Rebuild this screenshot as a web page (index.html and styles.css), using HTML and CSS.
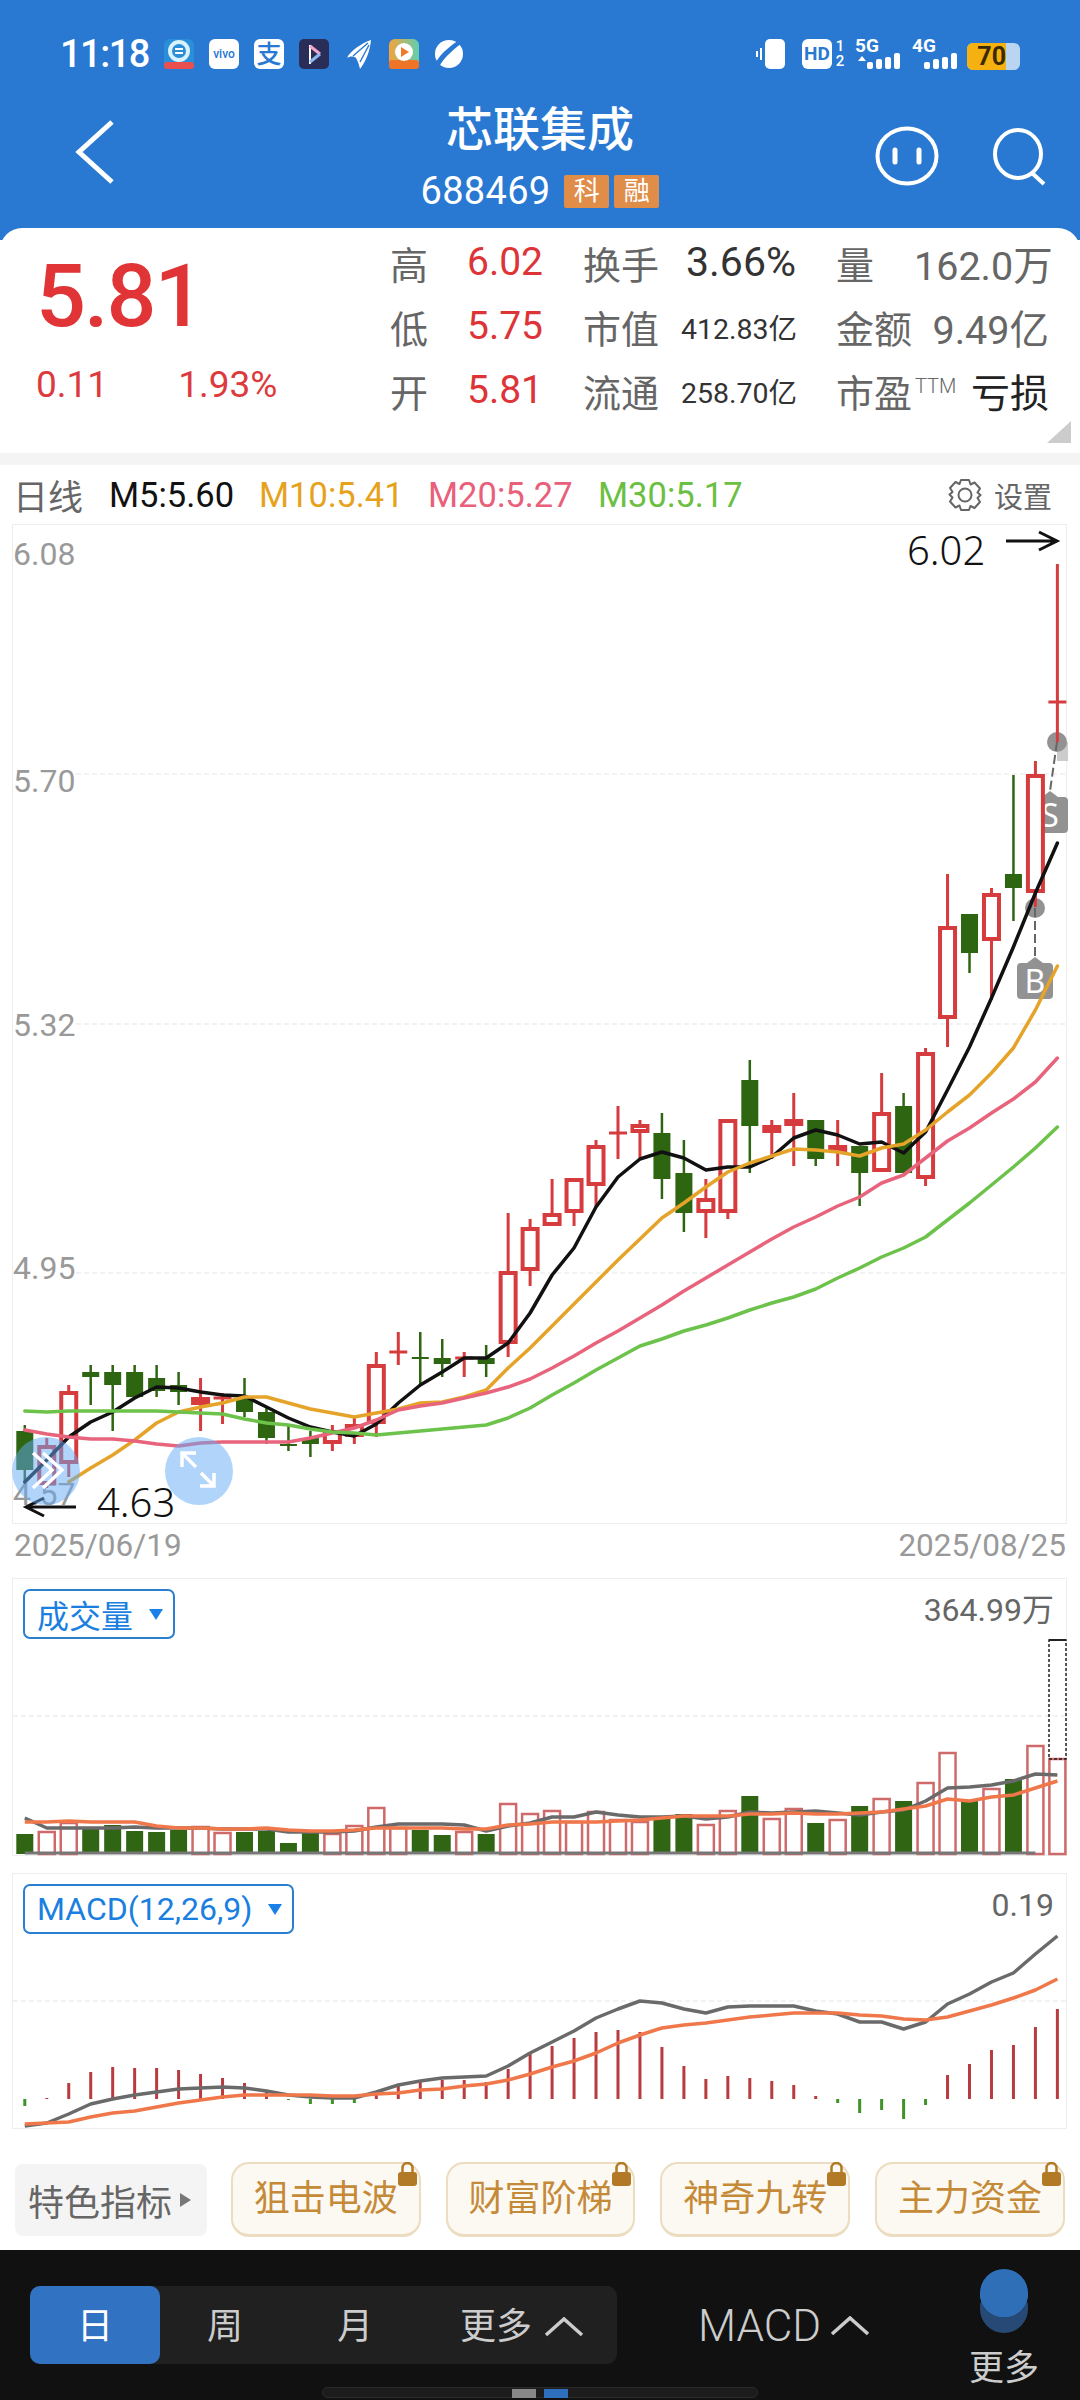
FILE: index.html
```html
<!DOCTYPE html>
<html lang="zh">
<head>
    <meta charset="utf-8">
    <title>芯联集成</title>
    <link rel="stylesheet" href="styles.css">
</head>
<body>
    <header class="top">
        <div class="status-bar">
            <span class="clock">11:18</span>
            <div class="app-icons">
                <svg class="app-icon" viewBox="0 0 30 30"><rect width="30" height="30" rx="6" fill="#2a8fd8"/><rect y="23" width="30" height="7" rx="3" fill="#e8504f"/><circle cx="15" cy="12" r="9" fill="none" stroke="#d8f2fb" stroke-width="4"/><rect x="11" y="9" width="8" height="2" fill="#fff"/><rect x="11" y="13" width="8" height="2" fill="#fff"/></svg>
                <svg class="app-icon" viewBox="0 0 30 30"><rect width="30" height="30" rx="6" fill="#fff"/><text class="vivo-mark" x="15" y="19" text-anchor="middle">vivo</text></svg>
                <svg class="app-icon" viewBox="0 0 30 30"><rect width="30" height="30" rx="6" fill="#fff"/><text class="alipay-mark" x="15" y="24" text-anchor="middle">支</text></svg>
                <svg class="app-icon" viewBox="0 0 30 30"><rect width="30" height="30" rx="5" fill="#2a2d57"/><path d="M11 6v19" stroke="#fff" stroke-width="2"/><path d="M11 7l10 8" stroke="#f2a6c8" stroke-width="3"/><path d="M21 15l-10 8" stroke="#8fb8ef" stroke-width="3"/></svg>
                <svg class="app-icon" viewBox="0 0 30 30"><path d="M27 1C18 4 6 12 3 19c3-2 7-2 9 0 2 3 3 7 4 11 6-8 10-18 11-29z" fill="#fff"/><path d="M24 4L9 17M25 6l-9 17" stroke="#2878d4" stroke-width="1.400"/></svg>
                <svg class="app-icon" viewBox="0 0 30 30"><defs><linearGradient id="tv-fill" x1="0" y1="0" x2="1" y2="0"><stop offset="0" stop-color="#f5a33a"/><stop offset="1" stop-color="#5fd0b0"/></linearGradient></defs><rect width="30" height="30" rx="6" fill="url(#tv-fill)"/><rect y="21" width="30" height="9" rx="3" fill="#ee7428"/><circle cx="15" cy="13" r="9" fill="#fff"/><path d="M12 8l8 5-8 5z" fill="#ef7a2a"/></svg>
                <svg class="app-icon" viewBox="0 0 30 30"><circle cx="15" cy="15" r="14" fill="#fff"/><path d="M27 0C20 4 6 14 1 25l4 3C10 18 22 8 30 3z" fill="#2878d4"/></svg>
            </div>
            <div class="sys-icons">
                <svg class="sys-vibrate" viewBox="0 0 30 30"><rect x="9" y="0" width="20" height="30" rx="5" fill="#fff"/><path d="M5 9v12M1 12v6" stroke="#fff" stroke-width="2" fill="none"/></svg>
                <span class="hd-box">HD</span>
                <span class="sim-nums">1<br>2</span>
                <div class="signal">
                    <div class="net"><span>5G</span><i class="updown"></i></div>
                    <div class="bars"><i class="b1"></i><i class="b2"></i><i class="b3"></i><i class="b4"></i></div>
                </div>
                <div class="signal sig-4g">
                    <div class="net"><span>4G</span></div>
                    <div class="bars"><i class="b1"></i><i class="b2"></i><i class="b3"></i><i class="b4"></i></div>
                </div>
                <div class="battery"><span class="battery-level">70</span></div>
            </div>
        </div>
        <nav class="nav">
            <svg class="nav-back" viewBox="0 0 40 66"><path d="M37 3L4 33l33 30" fill="none" stroke="#fff" stroke-width="5"/></svg>
            <div class="nav-title">
                <h1>芯联集成</h1>
                <div class="nav-code"><span>688469</span><b class="tag">科</b><b class="tag">融</b></div>
            </div>
            <svg class="nav-face" viewBox="0 0 64 60"><ellipse cx="32" cy="30" rx="29.500" ry="27.500" fill="none" stroke="#fff" stroke-width="4"/><path d="M20 24v12M44 24v12" stroke="#fff" stroke-width="5" stroke-linecap="round"/></svg>
            <svg class="nav-search" viewBox="0 0 54 58"><ellipse cx="25" cy="26" rx="23" ry="24" fill="none" stroke="#fff" stroke-width="4"/><path d="M39 45l12 11" stroke="#fff" stroke-width="4"/></svg>
        </nav>
    </header>

    <section class="quote">
        <div class="quote-main">
            <div class="last-price">5.81</div>
            <div class="change"><span>0.11</span><span>1.93%</span></div>
        </div>
        <div class="quote-table">
            <span class="q-label">高</span><span class="q-up">6.02</span><span class="q-label">换手</span><span class="q-val">3.66%</span><span class="q-label">量</span><span class="q-grey">162.0万</span>
            <span class="q-label">低</span><span class="q-up">5.75</span><span class="q-label">市值</span><span class="q-val small">412.83亿</span><span class="q-label">金额</span><span class="q-grey">9.49亿</span>
            <span class="q-label">开</span><span class="q-up">5.81</span><span class="q-label">流通</span><span class="q-val small">258.70亿</span><span class="q-label">市盈<sup>TTM</sup></span><span class="q-loss">亏损</span>
        </div>
        <i class="quote-fold"></i>
    </section>
    <div class="divider"></div>

    <div class="legend">
        <span class="lg-period">日线</span>
        <span class="lg-m5">M5:5.60</span>
        <span class="lg-m10">M10:5.41</span>
        <span class="lg-m20">M20:5.27</span>
        <span class="lg-m30">M30:5.17</span>
        <span class="lg-set">
            <svg class="gear" viewBox="0 0 34 34"><path d="M13 2h8l1.500 4.500 4-2 5.500 6-2.500 4 3 2.500-3 3 2.500 4-5.500 6-4-2L21 32h-8l-1.500-4.500-4 2-5.500-6 2.500-4-3-3 3-2.500-2.500-4 5.500-6 4 2z" fill="none" stroke="#666" stroke-width="2" stroke-linejoin="round"/><circle cx="17" cy="17" r="6.500" fill="none" stroke="#666" stroke-width="2"/></svg>
            设置
        </span>
    </div>

    <!-- the three panels use page coordinates in their viewBox -->
    <div class="panel panel-price">
        <svg viewBox="13 525 1053 998">
            <path class="grid" d="M76 774H1066M76 1024H1066M76 1273H1066"/>
            <text class="axis" x="13" y="565">6.08</text>
            <text class="axis" x="13" y="792">5.70</text>
            <text class="axis" x="13" y="1036">5.32</text>
            <text class="axis" x="13" y="1279">4.95</text>
            <text class="axis" x="13" y="1505">4.57</text>
            <g class="trade-marks">
                <rect x="1057" y="742" width="11" height="19" fill="#ccc"/>
                <circle cx="1057" cy="742" r="10"/>
                <path class="trade-link" d="M1057 742L1050 791"/>
                <path d="M1036 797h6l8-6 8 6h6a4 4 0 0 1 4 4v28a4 4 0 0 1-4 4h-28a4 4 0 0 1-4-4v-28a4 4 0 0 1 4-4z"/>
                <circle cx="1035" cy="908" r="10"/>
                <path class="trade-link" d="M1035 908V958"/>
                <path d="M1021 963h6l8-6 8 6h6a4 4 0 0 1 4 4v28a4 4 0 0 1-4 4h-28a4 4 0 0 1-4-4v-28a4 4 0 0 1 4-4z"/>
                <text class="trade-letter" x="1050" y="827">S</text>
                <text class="trade-letter" x="1035" y="993">B</text>
            </g>
            <g id="candles"></g>
            <g id="price-lines"></g>
            <text class="extreme" x="907" y="565">6.02</text>
            <path class="extreme-arrow" d="M1006 541H1056M1039 532L1057 541L1039 550"/>
            <text class="extreme" x="97" y="1517">4.63</text>
            <path class="extreme-arrow" d="M76 1507H27M44 1498L26 1507L44 1516"/>
            <circle class="float-btn" cx="46" cy="1471" r="34"/>
            <path class="float-icon" d="M33 1453L52 1470L33 1488M43 1453L62 1470L43 1488"/>
            <circle class="float-btn" cx="199" cy="1471" r="34"/>
            <path class="float-icon" d="M182 1467V1453H196M182 1453L196 1467M214 1473V1486H200M214 1486L201 1473"/>
        </svg>
    </div>

    <div class="dates"><span>2025/06/19</span><span>2025/08/25</span></div>

    <div class="panel panel-vol">
        <svg viewBox="13 1579 1053 276">
            <path class="grid" d="M13 1716H1066"/>
            <g id="vol-bars"></g>
            <rect class="vol-peak" x="1049" y="1640" width="17" height="119"/>
            <path class="vol-peak-top" d="M1049 1640H1066"/>
            <g id="vol-lines"></g>
        </svg>
        <div class="picker"><span>成交量</span><i class="caret"></i></div>
        <span class="panel-max">364.99万</span>
    </div>

    <div class="panel panel-macd">
        <svg viewBox="13 1874 1053 254">
            <path class="grid" d="M13 2001H1066"/>
            <g id="macd-bars"></g>
            <g id="macd-lines"></g>
        </svg>
        <div class="picker"><span>MACD(12,26,9)</span><i class="caret"></i></div>
        <span class="panel-max">0.19</span>
    </div>

    <div class="indicators">
        <div class="ind-menu">特色指标<i></i></div>
        <div class="ind-btn">狙击电波<svg class="lock" viewBox="0 0 19 24"><path d="M4.500 11V6a5 5 0 0 1 10 0v5" fill="none" stroke="#b27a26" stroke-width="2.500"/><rect y="10" width="19" height="14" rx="3" fill="#b27a26"/></svg></div>
        <div class="ind-btn">财富阶梯<svg class="lock" viewBox="0 0 19 24"><path d="M4.500 11V6a5 5 0 0 1 10 0v5" fill="none" stroke="#b27a26" stroke-width="2.500"/><rect y="10" width="19" height="14" rx="3" fill="#b27a26"/></svg></div>
        <div class="ind-btn">神奇九转<svg class="lock" viewBox="0 0 19 24"><path d="M4.500 11V6a5 5 0 0 1 10 0v5" fill="none" stroke="#b27a26" stroke-width="2.500"/><rect y="10" width="19" height="14" rx="3" fill="#b27a26"/></svg></div>
        <div class="ind-btn">主力资金<svg class="lock" viewBox="0 0 19 24"><path d="M4.500 11V6a5 5 0 0 1 10 0v5" fill="none" stroke="#b27a26" stroke-width="2.500"/><rect y="10" width="19" height="14" rx="3" fill="#b27a26"/></svg></div>
    </div>

    <footer class="bottom">
        <div class="tabs">
            <span class="tab active">日</span>
            <span class="tab">周</span>
            <span class="tab">月</span>
            <span class="tab tab-more">更多<svg class="chev" viewBox="0 0 40 20"><path d="M2 18L20 2l18 16" fill="none" stroke="#ccc" stroke-width="3.500"/></svg></span>
        </div>
        <div class="bottom-macd">MACD<svg class="chev" viewBox="0 0 40 20"><path d="M2 18L20 2l18 16" fill="none" stroke="#ccc" stroke-width="3.500"/></svg></div>
        <div class="bottom-more">
            <div class="dots"></div>
            <span>更多</span>
        </div>
        <div class="pager"><i class="pg-grey"></i><i class="pg-blue"></i></div>
    </footer>

    <script src="chart.js"></script>
</body>
</html>
```

FILE: styles.css
```css
* {
    box-sizing: border-box;
}

html, body {
    margin: 0;
    padding: 0;
}

body {
    width: 1080px;
    height: 2400px;
    overflow: hidden;
    background: #fff;
    color: #333;
    font-family: Roboto, "Noto Sans CJK SC", sans-serif;
}

/* header */
.top {
    height: 240px;
    margin-bottom: -12px;
    padding-top: 38px;
    background: #2979d3;
    color: #fff;
}

.status-bar {
    display: flex;
    align-items: center;
    height: 32px;
    padding: 0 60px 0 60px;
}

.clock {
    width: 104px;
    font-size: 38px;
    font-weight: 500;
    letter-spacing: -1.500px;
}

.app-icons {
    display: flex;
    gap: 15px;
}

.app-icon {
    width: 30px;
    height: 30px;
    overflow: visible;
}

.vivo-mark {
    font: 500 12px Roboto, sans-serif;
    fill: #2878d4;
}

.alipay-mark {
    font: 500 25px "Noto Sans CJK SC", sans-serif;
    fill: #2878d4;
}

.sys-icons {
    display: flex;
    align-items: center;
    margin-left: auto;
}

.sys-vibrate {
    width: 30px;
    height: 30px;
}

.hd-box {
    width: 30px;
    height: 30px;
    margin-left: 16px;
    border-radius: 6px;
    background: #fff;
    color: #2979d3;
    font-size: 19px;
    font-weight: 700;
    line-height: 30px;
    text-align: center;
}

.sim-nums {
    width: 14px;
    margin-left: 1px;
    font-size: 15px;
    font-weight: 500;
    line-height: 15px;
    text-align: center;
}

.signal {
    width: 45px;
    margin-left: 8px;
}

.sig-4g {
    margin-left: 12px;
}

.net {
    position: relative;
    height: 14px;
    font-size: 19px;
    font-weight: 700;
    line-height: 14px;
}

.bars {
    display: flex;
    align-items: flex-end;
    justify-content: flex-end;
    gap: 3px;
    height: 16px;
}

.bars i {
    display: block;
    width: 6px;
    border-radius: 2px;
    background: #fff;
}

.bars .b1 { height: 7px; }
.bars .b2 { height: 10px; }
.bars .b3 { height: 12px; }
.bars .b4 { height: 16px; }

.updown {
    position: absolute;
    left: 3px;
    top: 17px;
    width: 0;
    height: 0;
    border: 4px solid transparent;
    border-bottom: 5px solid #fff;
    border-top: 0;
}

.battery {
    width: 53px;
    height: 27px;
    margin: 5px 0 0 10px;
    border-radius: 6px;
    background: #b9d5f2;
    overflow: hidden;
}

.battery-level {
    display: block;
    width: 39px;
    height: 27px;
    background: #f5b110;
    color: #3a2a00;
    font-size: 25px;
    font-weight: 700;
    line-height: 27px;
    text-align: right;
}

.nav {
    position: relative;
    height: 130px;
}

.nav-back {
    position: absolute;
    left: 75px;
    top: 49px;
    width: 40px;
    height: 66px;
}

.nav-title {
    display: flex;
    flex-direction: column;
    align-items: center;
    padding-top: 26px;
}

h1 {
    margin: 0;
    font-size: 47px;
    font-weight: 500;
    line-height: 68px;
}

.nav-code {
    display: flex;
    align-items: center;
    gap: 5px;
    margin-top: 10px;
    font-size: 38px;
    line-height: 34px;
    letter-spacing: 0.300px;
}

.nav-code span {
    margin-right: 9px;
}

.tag {
    width: 45px;
    height: 33px;
    border-radius: 2px;
    background: #df8d49;
    color: #fff;
    font-size: 26px;
    font-weight: 400;
    line-height: 33px;
    text-align: center;
}

.nav-face {
    position: absolute;
    left: 875px;
    top: 56px;
    width: 64px;
    height: 60px;
}

.nav-search {
    position: absolute;
    left: 993px;
    top: 58px;
    width: 54px;
    height: 58px;
}

/* quote block */
.quote {
    position: relative;
    display: flex;
    height: 225px;
    border-radius: 22px 22px 0 0;
    background: #fff;
}

.quote-main {
    width: 388px;
    padding-left: 36px;
}

.last-price {
    height: 118px;
    color: #e03436;
    font-size: 88px;
    font-weight: 500;
    letter-spacing: -2px;
    line-height: 136px;
}

.change {
    display: flex;
    gap: 70px;
    margin-top: 18px;
    color: #dd3a3d;
    font-size: 37px;
    line-height: 42px;
}

.quote-table {
    display: grid;
    grid-template-columns: 77px 116px 103px 150px 78px 135px;
    grid-auto-rows: 64px;
    align-items: center;
    margin-left: 2px;
    padding-top: 2px;
    font-size: 38px;
}

.q-label {
    color: #666;
    white-space: nowrap;
}

.q-label sup {
    margin-left: 3px;
    font-size: 20px;
    font-weight: 300;
    line-height: 0;
    vertical-align: 14px;
}

.q-up {
    color: #dd3438;
    font-size: 39px;
}

.q-val {
    color: #333;
    font-size: 41px;
    white-space: nowrap;
}

.q-val.small {
    margin-left: -5px;
    font-size: 28.500px;
}

.q-grey {
    color: #666;
    font-size: 39.500px;
    text-align: right;
    white-space: nowrap;
}

.q-loss {
    color: #222;
    font-size: 39px;
    text-align: right;
}

.quote-fold {
    position: absolute;
    right: 9px;
    top: 193px;
    border-left: 24px solid transparent;
    border-bottom: 22px solid #ccc;
}

.divider {
    height: 12px;
    background: #f4f4f4;
}

/* MA legend */
.legend {
    display: flex;
    align-items: center;
    height: 59px;
    padding-left: 13px;
    font-size: 34.500px;
}

.lg-period {
    width: 96px;
    color: #666;
    font-size: 35px;
}

.lg-m5 { width: 150px; color: #111; }
.lg-m10 { width: 169px; color: #e6a21c; }
.lg-m20 { width: 170px; color: #e8607a; }
.lg-m30 { color: #6bbf42; }

.lg-set {
    display: flex;
    align-items: center;
    gap: 12px;
    margin-left: auto;
    padding-right: 28px;
    color: #666;
    font-size: 29px;
}

.gear {
    width: 34px;
    height: 34px;
}

/* chart panels */
.panel {
    position: relative;
    margin: 0 13px 0 12px;
    border: 1px solid #eee;
}

.panel svg {
    display: block;
    width: 100%;
    height: 100%;
    overflow: visible;
}

.panel-price { height: 1000px; }
.panel-vol { height: 278px; }
.panel-macd { height: 256px; margin-top: 17px; }

.grid {
    fill: none;
    stroke: #eee;
    stroke-width: 1.500;
    stroke-dasharray: 5 3;
}

.axis {
    fill: #999;
    font-size: 32px;
}

.extreme {
    fill: #111;
    font-family: "Noto Sans", sans-serif;
    font-size: 40px;
    font-weight: 300;
}

.extreme-arrow {
    fill: none;
    stroke: #111;
    stroke-width: 3;
}

.trade-marks {
    fill: #929292;
}

.trade-link {
    fill: none;
    stroke: #666;
    stroke-width: 2;
    stroke-dasharray: 9 4;
}

.trade-letter {
    fill: #fff;
    font-size: 32px;
    font-family: "Noto Sans", sans-serif;
    text-anchor: middle;
}

.float-btn {
    fill: rgba(100, 170, 245, 0.5);
}

.float-icon {
    fill: none;
    stroke: #fff;
    stroke-width: 3.500;
}

.up-candle {
    fill: #fff;
    stroke: #d63c3e;
    stroke-width: 4;
}

.up-wick {
    stroke: #d63c3e;
    stroke-width: 3;
}

.down-candle {
    fill: #2d6510;
}

.down-wick {
    stroke: #2d6510;
    stroke-width: 2.500;
}

.ma {
    fill: none;
    stroke-width: 3.500;
    stroke-linejoin: round;
    stroke-linecap: round;
}

.ma-5 { stroke: #111; }
.ma-10 { stroke: #e5a429; }
.ma-20 { stroke: #e8647c; }
.ma-30 { stroke: #6cc24a; }

.vol-up {
    fill: #fff;
    stroke: #cf6a6a;
    stroke-width: 2.500;
}

.vol-down {
    fill: #2f6513;
}

.vol-peak {
    fill: none;
    stroke: #222;
    stroke-width: 1.500;
    stroke-dasharray: 3 2;
}

.vol-peak-top {
    stroke: #222;
    stroke-width: 2;
}

.vol-base {
    stroke: #777;
    stroke-width: 3;
}

.line-grey {
    fill: none;
    stroke: #6a6a6a;
    stroke-width: 3.500;
    stroke-linejoin: round;
}

.line-orange {
    fill: none;
    stroke: #f0774a;
    stroke-width: 3.500;
    stroke-linejoin: round;
}

.macd-up {
    fill: #b83c3f;
}

.macd-down {
    fill: #3e9426;
}

.picker {
    position: absolute;
    left: 10px;
    top: 10px;
    display: flex;
    align-items: center;
    gap: 16px;
    height: 50px;
    padding: 0 10px 0 12px;
    border: 2px solid #2b7fd0;
    border-radius: 7px;
    background: #fff;
    color: #1a7fe0;
    font-size: 32px;
}

.caret {
    width: 0;
    height: 0;
    border-left: 7px solid transparent;
    border-right: 7px solid transparent;
    border-top: 11px solid #1a80e8;
}

.panel-max {
    position: absolute;
    right: 12px;
    top: 12px;
    color: #666;
    font-size: 32px;
    line-height: 38px;
}

.dates {
    display: flex;
    justify-content: space-between;
    align-items: center;
    height: 54px;
    padding: 0 14px 11px;
    color: #999;
    font-size: 31.500px;
}

/* indicator buttons */
.indicators {
    display: flex;
    align-items: center;
    height: 75px;
    margin: 33px 15px 13px 15px;
}

.ind-menu {
    display: flex;
    align-items: center;
    width: 192px;
    height: 72px;
    margin-right: 24px;
    padding-left: 13px;
    border-radius: 8px;
    background: #f4f4f4;
    color: #666;
    font-size: 36px;
    white-space: nowrap;
}

.ind-menu i {
    width: 0;
    height: 0;
    margin-left: 8px;
    border-top: 7px solid transparent;
    border-bottom: 7px solid transparent;
    border-left: 11px solid #777;
}

.ind-btn {
    position: relative;
    width: 190px;
    height: 75px;
    margin-right: 25px;
    border: 2px solid #ecdcc0;
    border-bottom-width: 3px;
    border-radius: 18px;
    background: #fcf9f2;
    color: #c58a38;
    font-size: 36px;
    line-height: 70px;
    text-align: center;
    white-space: nowrap;
}

.ind-btn:last-child {
    margin-right: 0;
}

.lock {
    position: absolute;
    right: 2px;
    top: -2px;
    width: 19px;
    height: 24px;
}

/* bottom bar */
.bottom {
    position: relative;
    height: 150px;
    background: #111;
    color: #ccc;
}

.tabs {
    position: absolute;
    left: 30px;
    top: 36px;
    display: flex;
    width: 587px;
    height: 78px;
    border-radius: 10px;
    background: #202020;
    font-size: 36px;
    line-height: 82px;
    text-align: center;
}

.tab {
    width: 130px;
}

.tab.active {
    border-radius: 10px;
    background: #3173c2;
    color: #fff;
}

.tab-more {
    display: flex;
    align-items: center;
    gap: 12px;
    width: 197px;
    padding: 4px 0 0 40px;
}

.chev {
    width: 40px;
    height: 20px;
}

.bottom-macd {
    position: absolute;
    left: 698px;
    top: 51px;
    display: flex;
    align-items: center;
    gap: 9px;
    font-size: 44px;
    font-weight: 300;
    line-height: 50px;
}

.bottom-more {
    position: absolute;
    left: 968px;
    top: 19px;
    width: 72px;
    font-size: 35px;
    line-height: 44px;
    text-align: center;
}

.dots {
    width: 48px;
    height: 64px;
    margin: 0 auto 14px;
    border-radius: 24px;
    background: radial-gradient(circle at 24px 24px, #2e6fb8 24px, transparent 24.500px),
        radial-gradient(circle at 24px 40px, #264a75 24px, transparent 24.500px);
}

.pager {
    position: absolute;
    left: 322px;
    top: 137px;
    width: 436px;
    height: 11px;
    border: 1px solid #2a2a2a;
    border-radius: 5px;
    background: #1c1c1c;
}

.pager i {
    position: absolute;
    top: 1px;
    width: 24px;
    height: 9px;
}

.pg-grey {
    left: 189px;
    background: #888;
}

.pg-blue {
    left: 221px;
    background: #2e70bd;
}
```

FILE: chart.js
```js
// kline data for 2025/06/19 - 2025/08/25, all y values already scaled to the screen
const step = 21.97;
const xAt = (i) => 24.8 + step * i;

// [up?, high, bodyTop, bodyBottom, low]
const candles = [
    [0,1425,1431,1470,1483],[1,1438,1445,1485,1488],[1,1385,1391,1464,1477],[0,1365,1372,1377,1405],
    [0,1365,1372,1385,1431],[0,1365,1372,1397,1397],[0,1365,1378,1391,1397],[0,1372,1385,1392,1405],
    [1,1378,1397,1405,1431],[1,1393,1397,1399,1424],[0,1378,1398,1412,1417],[0,1407,1412,1438,1444],
    [0,1425,1444,1446,1451],[0,1431,1438,1444,1457],[1,1425,1430,1444,1451],[1,1418,1424,1437,1444],
    [1,1352,1364,1424,1437],[1,1332,1351,1353,1365],[0,1332,1357,1359,1385],[0,1339,1358,1364,1377],
    [1,1352,1357,1359,1377],[0,1345,1358,1364,1377],[1,1213,1271,1344,1357],[1,1219,1227,1271,1286],
    [1,1179,1213,1226,1226],[1,1178,1178,1213,1226],[1,1140,1145,1186,1207],[1,1106,1132,1134,1159],
    [1,1120,1124,1133,1159],[0,1113,1133,1179,1199],[0,1140,1173,1213,1232],[1,1179,1198,1213,1238],
    [1,1119,1119,1213,1219],[0,1060,1080,1126,1173],[1,1120,1125,1133,1159],[1,1093,1119,1126,1166],
    [0,1120,1120,1159,1166],[1,1120,1145,1152,1166],[0,1146,1146,1173,1206],[1,1073,1112,1172,1172],
    [0,1093,1106,1173,1173],[1,1048,1052,1179,1186],[1,874,926,1019,1047],[0,914,914,953,973],
    [1,888,893,941,1000],[0,775,874,888,921],[1,761,774,893,907],[1,564,701,703,742]
];

const ma5 = [1482,1460,1437,1422,1412,1398,1387,1388,1392,1395,1396,1407,1418,1427,1432,1436,1424,1403,1385,1372,1358,1358,1343,1313,1275,1248,1207,1177,1159,1152,1158,1170,1167,1167,1157,1138,1130,1135,1144,1142,1153,1132,1090,1047,998,947,893,843];
const ma10 = [null,null,1482,1468,1455,1440,1423,1412,1407,1403,1397,1397,1403,1409,1413,1417,1413,1409,1403,1402,1397,1390,1368,1348,1326,1304,1282,1260,1239,1218,1203,1187,1172,1163,1156,1149,1150,1152,1156,1148,1144,1130,1112,1095,1073,1048,1010,966];
const ma20 = [1430,1434,1437,1439,1439,1441,1444,1446,1443,1442,1442,1442,1442,1438,1433,1428,1420,1410,1406,1403,1398,1393,1387,1379,1368,1356,1343,1331,1318,1305,1291,1278,1265,1252,1239,1227,1217,1206,1197,1183,1175,1158,1141,1128,1113,1099,1082,1058];
const ma30 = [1411,1412,1411,1411,1411,1411,1411,1412,1413,1414,1419,1423,1425,1429,1432,1433,1435,1433,1431,1429,1427,1425,1418,1408,1395,1383,1370,1358,1346,1339,1331,1325,1318,1310,1303,1297,1289,1278,1268,1257,1248,1237,1220,1203,1185,1167,1148,1127];

// volume: [up?, top]
const volumes = [
    [0,1834],[1,1832],[1,1823],[0,1828],[0,1825],[0,1831],[0,1832],[0,1830],[1,1827],[1,1833],[0,1832],[0,1831],
    [0,1843],[0,1833],[1,1834],[1,1826],[1,1808],[1,1828],[0,1830],[0,1835],[1,1832],[0,1834],[1,1804],[1,1814],
    [1,1811],[1,1822],[1,1812],[1,1820],[1,1822],[0,1817],[0,1814],[1,1825],[1,1811],[0,1796],[1,1819],[1,1809],
    [0,1823],[1,1820],[0,1806],[1,1799],[0,1801],[1,1783],[1,1753],[0,1800],[1,1789],[0,1779],[1,1746],[1,1759]
];
const volShort = [1818,1828,1828,1828,1828,1827,1828,1828,1828,1829,1829,1829,1832,1832,1832,1831,1827,1824,1824,1824,1825,1831,1826,1823,1817,1817,1812,1815,1817,1817,1816,1819,1817,1812,1813,1812,1811,1813,1815,1812,1810,1801,1788,1787,1785,1781,1774,1775];
const volLong = [1822,1822,1821,1822,1822,1822,1826,1828,1828,1829,1829,1828,1830,1831,1831,1830,1828,1828,1828,1828,1829,1829,1825,1824,1822,1822,1822,1821,1820,1818,1816,1816,1816,1814,1814,1813,1814,1814,1813,1812,1809,1806,1799,1801,1797,1795,1788,1781];

// MACD histogram height above zero line, negative is below
const zero = 2099;
const hist = [-7,1,16,27,32,31,31,29,25,21,16,8,-1,-5,-5,-4,7,15,18,19,19,17,30,45,53,61,67,69,67,52,33,20,23,21,18,14,3,-4,-14,-11,-20,-6,24,35,49,54,72,90];
const dif = [2126,2123,2114,2104,2099,2095,2092,2089,2088,2087,2088,2091,2095,2097,2098,2098,2092,2085,2081,2078,2077,2076,2066,2053,2042,2031,2018,2009,2001,2003,2009,2013,2007,2006,2006,2006,2011,2014,2022,2022,2029,2022,2004,1994,1982,1973,1954,1936];
const dea = [2124,2123,2122,2117,2113,2111,2107,2103,2100,2097,2095,2095,2095,2095,2096,2096,2094,2093,2090,2089,2086,2084,2080,2074,2067,2061,2053,2043,2035,2028,2025,2023,2020,2017,2015,2013,2013,2013,2015,2016,2019,2020,2017,2011,2005,1998,1990,1979];

function polyline(values, cls) {
    const pts = values
        .map((y, i) => (y === null ? null : `${xAt(i).toFixed(1)},${y}`))
        .filter(Boolean)
        .join(' ');
    return `<polyline class="${cls}" points="${pts}"/>`;
}

function fill(id, html) {
    document.getElementById(id).innerHTML = html;
}

function candleMarkup(c, i) {
    const [up, high, top, bottom, low] = c;
    const x = xAt(i);
    if (up) {
        const inner = bottom - top - 4;
        return `<path class="up-wick" d="M${x} ${high}V${top}M${x} ${bottom}V${low}"/>` +
            (inner > 1
                ? `<rect class="up-candle" x="${x - 7.5}" y="${top + 2}" width="15" height="${inner}"/>`
                : `<path class="up-wick" d="M${x - 9} ${(top + bottom) / 2}h18"/>`);
    }
    return `<path class="down-wick" d="M${x} ${high}V${low}"/>` +
        `<rect class="down-candle" x="${x - 8.5}" y="${top}" width="17" height="${bottom - top}"/>`;
}

fill('candles', candles.map(candleMarkup).join(''));
fill('price-lines',
    polyline(ma5, 'ma ma-5') + polyline(ma10, 'ma ma-10') +
    polyline(ma20, 'ma ma-20') + polyline(ma30, 'ma ma-30'));

const volBase = 1854;
fill('vol-bars', volumes.map(([up, top], i) => {
    const x = xAt(i);
    return up
        ? `<rect class="vol-up" x="${x - 8}" y="${top}" width="16" height="${volBase - top}"/>`
        : `<rect class="vol-down" x="${x - 8.5}" y="${top}" width="17" height="${volBase - top}"/>`;
}).join(''));
fill('vol-lines',
    `<path class="vol-base" d="M${xAt(0)} 1853H${xAt(46)}"/>` +
    polyline(volShort, 'line-grey') + polyline(volLong, 'line-orange'));

fill('macd-bars', hist.map((h, i) => {
    const x = xAt(i) - 1.5;
    return h >= 0
        ? `<rect class="macd-up" x="${x}" y="${zero - h}" width="3" height="${h}"/>`
        : `<rect class="macd-down" x="${x}" y="${zero}" width="3" height="${-h}"/>`;
}).join(''));
fill('macd-lines', polyline(dif, 'line-grey') + polyline(dea, 'line-orange'));
```
